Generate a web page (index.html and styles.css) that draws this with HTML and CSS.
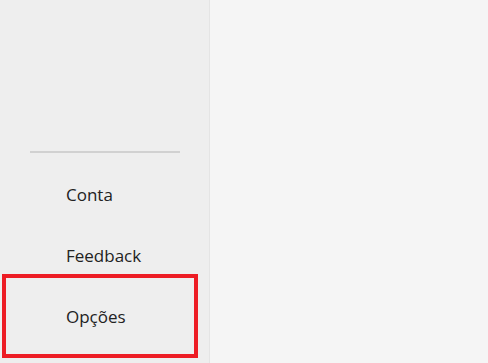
FILE: index.html
```html
<!DOCTYPE html>
<html lang="pt">
<head>
<meta charset="utf-8">
<link rel="stylesheet" href="styles.css">
</head>
<body>
<div class="app">
  <aside class="sidebar">
    <div class="divider"></div>
    <nav class="nav">
      <div class="nav-item">Conta</div>
      <div class="nav-item">Feedback</div>
      <div class="nav-item">Opções</div>
    </nav>
  </aside>
  <main class="content"></main>
  <div class="highlight"></div>
</div>
</body>
</html>
```
FILE: styles.css
```css
html, body {
  margin: 0;
  padding: 0;
}
body {
  width: 488px;
  height: 363px;
  overflow: hidden;
  font-family: "Open Sans", "Noto Sans", sans-serif;
}
.app {
  position: relative;
  display: flex;
  height: 363px;
}
.sidebar {
  width: 209px;
  flex: 0 0 209px;
  background: #eeeeee;
  border-right: 1px solid #e4e4e4;
  padding-top: 151px;
  box-sizing: content-box;
}
.divider {
  height: 2px;
  margin: 0 29px 0 30px;
  background: #d1d1d1;
}
.nav {
  margin-top: 11px;
  display: flex;
  flex-direction: column;
}
.nav-item {
  height: 61px;
  display: flex;
  align-items: center;
  padding-left: 66px;
  font-size: 17px;
  color: #222222;
}
.content {
  flex: 1;
  background: #f5f5f5;
}
.highlight {
  position: absolute;
  left: 2px;
  top: 274px;
  width: 196px;
  height: 84px;
  box-sizing: border-box;
  border: 4px solid #ed1c24;
}
```
